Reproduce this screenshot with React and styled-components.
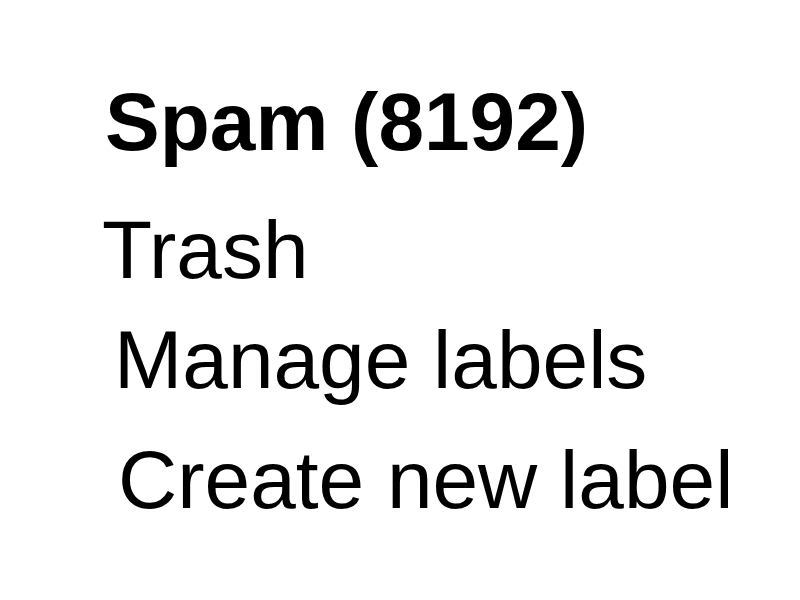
import React from 'react'
import styled, { createGlobalStyle } from 'styled-components'

const GlobalStyle = createGlobalStyle`
  html, body {
    margin: 0;
    padding: 0;
    background: #ffffff;
  }
`

const folders = [
  { label: 'Spam (8192)', bold: true, indent: 105, top: 72 },
  { label: 'Trash', indent: 102, top: 28 },
  { label: 'Manage labels', indent: 114, top: 10 },
  { label: 'Create new label', indent: 118, top: 20 },
]

const App = () => {
  return (
    <Page>
      <GlobalStyle />
      <FolderList>
        {folders.map((f) => (
          <FolderLink key={f.label} $bold={f.bold} $indent={f.indent} $top={f.top}>
            {f.label}
          </FolderLink>
        ))}
      </FolderList>
    </Page>
  )
}

export default App

const Page = styled.div`
  width: 800px;
  height: 600px;
  background: #ffffff;
  overflow: hidden;
`

const FolderList = styled.nav`
  display: flex;
  flex-direction: column;
  align-items: flex-start;
`

const FolderLink = styled.a`
  display: block;
  margin-top: ${(p) => p.$top}px;
  padding-left: ${(p) => p.$indent}px;
  font-family: "Liberation Sans", Arial, sans-serif;
  font-size: 82px;
  line-height: 100px;
  font-weight: ${(p) => (p.$bold ? 700 : 400)};
  color: #000000;
  white-space: nowrap;
  cursor: pointer;
`
